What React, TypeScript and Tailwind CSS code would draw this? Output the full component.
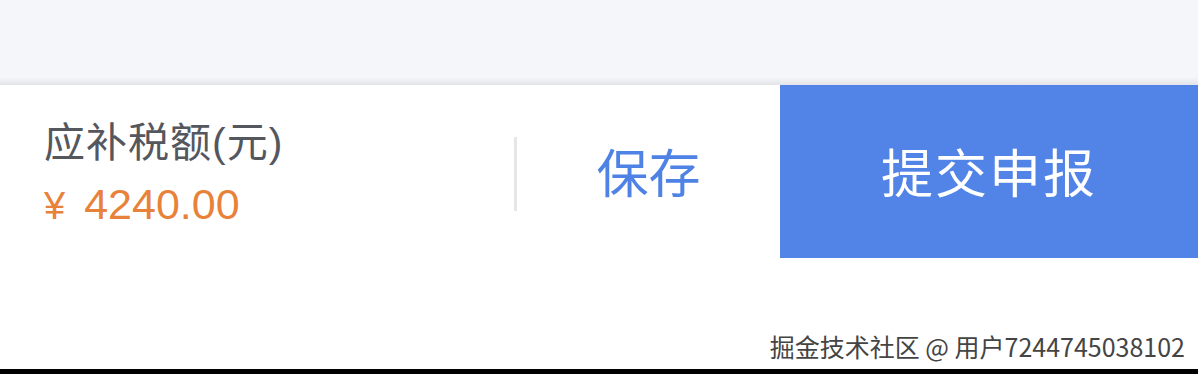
import React from 'react'

const font = { fontFamily: '"Noto Sans CJK SC", "Noto Sans", sans-serif' }
const latin = { fontFamily: '"Liberation Sans", "Noto Sans CJK SC", sans-serif' }

export default function App() {
  return (
    <div className="w-[1198px] h-[374px] flex flex-col bg-white overflow-hidden" style={font}>
      {/* page background above the bar */}
      <div className="h-[78px] bg-[#f5f6f9]" />
      <div className="h-[7px] bg-gradient-to-b from-[#f3f4f7] to-[#e3e4e8]" />

      {/* bottom action bar */}
      <div className="h-[173px] flex bg-white">
        <div className="w-[514px] flex flex-col justify-center pl-[44px] pt-[6px]">
          <div className="text-[41px] leading-[50px] text-[#54575d] tracking-[1px]">
            应补税额<span style={latin}>(</span>元<span style={latin}>)</span>
          </div>
          <div className="flex items-baseline text-[#e8823b] mt-[10px]" style={latin}>
            <span className="text-[38px] mr-[19px]">¥</span>
            <span className="text-[43px] leading-[48px]">4240.00</span>
          </div>
        </div>
        <div className="flex items-center pt-[4px]">
          <div className="w-[3px] h-[74px] bg-[#e6e6e8]" />
        </div>
        <button className="w-[263px] flex items-center justify-center pb-[2px] text-[52px] text-[#4f82e5]">
          保存
        </button>
        <button className="flex-1 flex items-center justify-center pb-[2px] bg-[#5284e8] text-[52px] text-white tracking-[2px]">
          提交申报
        </button>
      </div>

      {/* watermark area */}
      <div className="flex-1 flex items-end justify-end pr-[13px] pb-[6px]">
        <span
          className="text-[25px] leading-[34px] text-[#444]"
          style={{ textShadow: '1px 1px 0 #fff, -1px -1px 0 #fff' }}
        >
          掘金技术社区 @ 用户7244745038102
        </span>
      </div>
      <div className="h-[5px] bg-black" />
    </div>
  )
}
